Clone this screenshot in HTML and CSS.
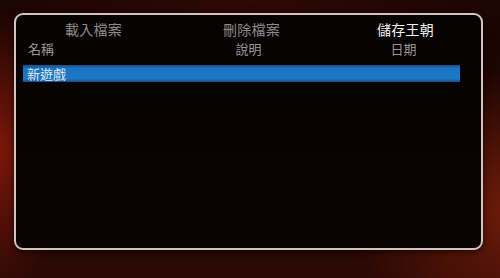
FILE: index.html
```html
<!DOCTYPE html>
<html lang="zh-Hant">
<head>
  <meta charset="UTF-8">
  <title>儲存王朝</title>
  <link rel="stylesheet" href="styles.css">
</head>
<body>
  <div class="panel">
    <!-- tabs -->
    <div class="tabs">
      <div class="tab">載入檔案</div>
      <div class="tab">刪除檔案</div>
      <div class="tab active">儲存王朝</div>
    </div>

    <!-- column headers -->
    <div class="cols">
      <div class="col col-name">名稱</div>
      <div class="col">說明</div>
      <div class="col">日期</div>
    </div>

    <div class="list">
      <div class="row selected">新遊戲</div>
    </div>
  </div>
</body>
</html>
```

FILE: styles.css
```css
html, body {
  margin: 0;
  padding: 0;
  height: 100%;
}

body {
  font-family: "Noto Sans CJK TC", "Noto Sans", sans-serif;
  background-color: #1a0503;
  background-image:
    radial-gradient(ellipse 70px 140px at 0px 150px, rgba(140, 26, 10, 0.85), rgba(140, 26, 10, 0) 100%),
    radial-gradient(ellipse 170px 140px at 520px 210px, rgba(125, 32, 10, 0.85), rgba(125, 32, 10, 0) 100%),
    radial-gradient(ellipse 300px 60px at 250px 0px, rgba(60, 12, 6, 0.6), rgba(60, 12, 6, 0) 100%),
    linear-gradient(180deg, #180403 0%, #220604 60%, #2c0905 100%);
  overflow: hidden;
}

/* main framed panel */
.panel {
  box-sizing: border-box;
  margin: 13px 17px 0 14px;
  height: 237px;
  border: 2px solid #d2c2c0;
  border-radius: 9px;
  background: linear-gradient(180deg, #070202 0%, #090303 100%);
  box-shadow: 0 2px 6px rgba(0, 0, 0, 0.6);
}

.tabs, .cols {
  display: grid;
  grid-template-columns: 1fr 1fr 1fr;
}

.tabs {
  padding-top: 6px;
}

.tab {
  text-align: center;
  font-size: 14px;
  line-height: 16px;
  color: #8e8a8a;
  letter-spacing: 0.3px;
}

.tab:first-child {
  padding-left: 0;
}

.tab:nth-child(2) {
  padding-left: 6px;
}

.tab.active {
  color: #f2f2f2;
  padding-left: 4px;
}

.cols {
  padding-top: 4px;
}

.col {
  text-align: center;
  font-size: 13px;
  line-height: 16px;
  color: #9a9696;
}

.col-name {
  text-align: left;
  padding-left: 12px;
}

.list {
  padding: 8px 21px 0 7px;
}

.row {
  height: 17px;
  line-height: 17px;
  font-size: 13px;
  color: #e2eaf2;
  padding-left: 4px;
}

.row.selected {
  background: linear-gradient(180deg, #15508a 0%, #1a74c0 20%, #1b78c4 80%, #134f88 100%);
}
```
